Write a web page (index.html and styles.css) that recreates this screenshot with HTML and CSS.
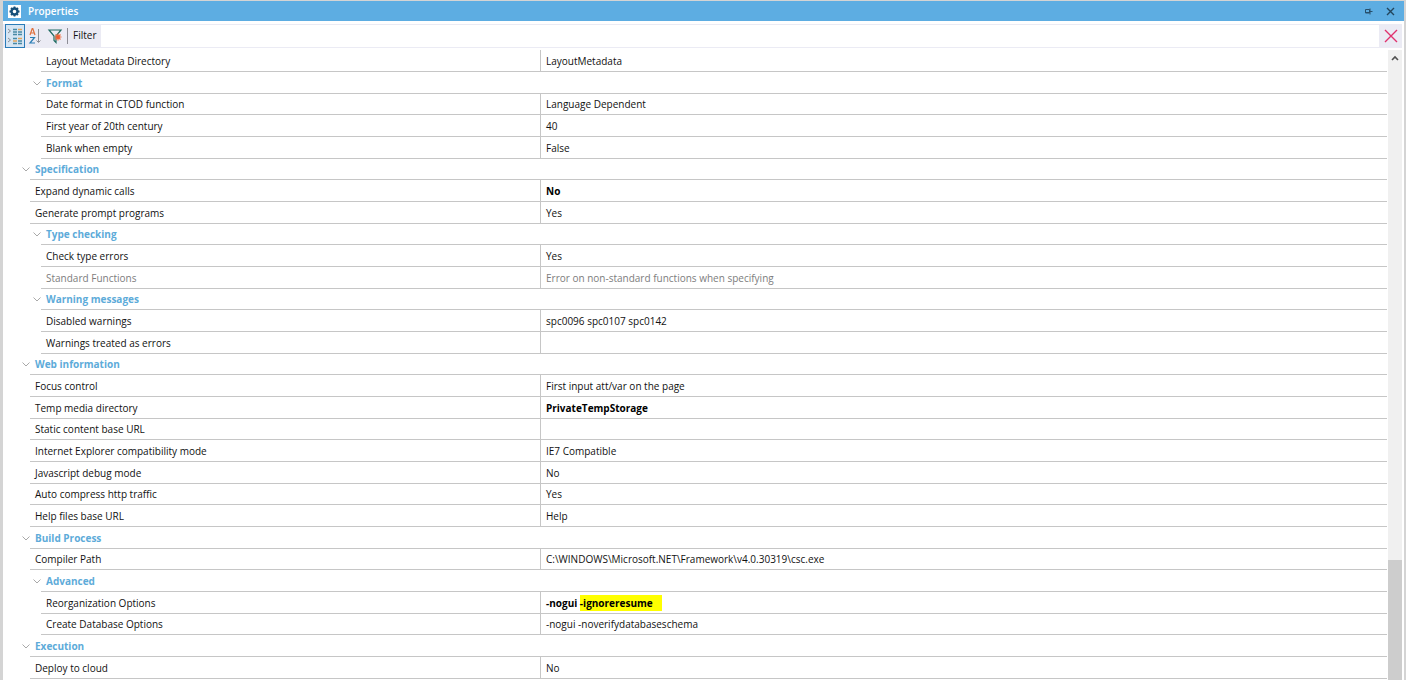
FILE: index.html
```
<!DOCTYPE html>
<html lang="en">
<head>
<meta charset="utf-8">
<title>Properties</title>
<link rel="stylesheet" href="styles.css">
</head>
<body>
<section class="panel">
  <header class="titlebar">
    <svg class="app-icon" width="13" height="13" viewBox="0 0 13 13" aria-hidden="true"><rect width="13" height="13" fill="#fff"/><circle cx="6.5" cy="6.5" r="3" fill="none" stroke="#17507a" stroke-width="2.4"/><path d="M6.5 1.500v2M6.500 9.500v2M1.500 6.500h2M9.500 6.500h2M3 3l1.200 1.200M8.800 8.800L10 10M10 3L8.800 4.200M4.200 8.800L3 10" stroke="#17507a" stroke-width="1.800"/></svg>
    <h1 class="title">Properties</h1>
    <button class="title-button" type="button" aria-label="Pin"><svg width="9" height="9" viewBox="0 0 9 9"><path d="M1.500 2.500h4v3.500h-4zM1 5.500h5M6 1.500v6M6 4.500h2.500" fill="none" stroke="#28506c"/></svg></button>
    <button class="title-button" type="button" aria-label="Close"><svg width="9" height="9" viewBox="0 0 9 9"><path d="M1 1l7 7M8 1L1 8" stroke="#23455c" stroke-width="1.4"/></svg></button>
  </header>
  <div class="toolbar">
    <button class="tool tool-active" type="button" aria-label="Categorized"><svg width="18" height="18" viewBox="0 0 18 18"><path d="M2 2l2.500 2L2 6M2 11l2.500 2L2 15" fill="none" stroke="#8b8f96"/><path d="M7 2.500h4M7 5h4M7 7.500h4M12 5h4M12 7.500h4M7 11.500h4M7 16.500h4M12 14h4M12 16.500h4" stroke="#4889a5" stroke-width="1.500"/><path d="M12 2.500h4M7 14h4M12 11.500h4" stroke="#e0a45c" stroke-width="1.500"/></svg></button>
    <button class="tool" type="button" aria-label="Alphabetical"><svg width="14" height="18" viewBox="0 0 14 18"><path d="M2 8l2.200-6.500h.6L7 8M3 6h3" fill="none" stroke="#e0703c" stroke-width="1.200"/><path d="M2 10.500h4.500L2 16h5" fill="none" stroke="#2a7fb5" stroke-width="1.200"/><path d="M10.500 2v13M8.500 13.500l2 2 2-2" fill="none" stroke="#8a8d93"/></svg></button>
    <button class="tool" type="button" aria-label="Filter properties"><svg width="16" height="18" viewBox="0 0 16 18"><path d="M2 3h12L9 9v6.500L7 13.500V9z" fill="none" stroke="#1f6b62" stroke-width="1.200"/><path d="M11 6.500v7M7.500 10h7M8.500 7.500l5 5M13.500 7.500l-5 5" stroke="#f0703f" stroke-width="1.200"/><circle cx="11" cy="10" r="1.800" fill="#ef5a33"/></svg></button>
    <label class="filter-label" for="filter">Filter</label>
    <input class="filter" id="filter" type="text">
    <button class="clear" type="button" aria-label="Clear filter"><svg width="14" height="14" viewBox="0 0 14 14"><path d="M1 1l12 12M13 1L1 13" stroke="#e0316e" stroke-width="1.400"/></svg></button>
  </div>
  <div class="content">
    <table class="grid">
      <colgroup><col class="col-gutter"><col class="col-indent"><col class="col-name"><col></colgroup>
      <tbody>
        <tr><td colspan="2"></td><td class="name">Layout Metadata Directory</td><td class="value">LayoutMetadata</td></tr>
        <tr><td colspan="2" class="toggle"><svg class="chevron" viewBox="0 0 8 5"><path d="M.5.5L4 4L7.500.5"/></svg></td><th colspan="2" class="group">Format</th></tr>
        <tr><td colspan="2"></td><td class="name">Date format in CTOD function</td><td class="value">Language Dependent</td></tr>
        <tr><td colspan="2"></td><td class="name">First year of 20th century</td><td class="value">40</td></tr>
        <tr><td colspan="2"></td><td class="name">Blank when empty</td><td class="value">False</td></tr>
        <tr><td class="toggle"><svg class="chevron" viewBox="0 0 8 5"><path d="M.5.5L4 4L7.500.5"/></svg></td><th colspan="3" class="group">Specification</th></tr>
        <tr><td></td><td colspan="2" class="name">Expand dynamic calls</td><td class="value strong">No</td></tr>
        <tr><td></td><td colspan="2" class="name">Generate prompt programs</td><td class="value">Yes</td></tr>
        <tr><td colspan="2" class="toggle"><svg class="chevron" viewBox="0 0 8 5"><path d="M.5.5L4 4L7.500.5"/></svg></td><th colspan="2" class="group">Type checking</th></tr>
        <tr><td colspan="2"></td><td class="name">Check type errors</td><td class="value">Yes</td></tr>
        <tr class="disabled"><td colspan="2"></td><td class="name">Standard Functions</td><td class="value">Error on non-standard functions when specifying</td></tr>
        <tr><td colspan="2" class="toggle"><svg class="chevron" viewBox="0 0 8 5"><path d="M.5.5L4 4L7.500.5"/></svg></td><th colspan="2" class="group">Warning messages</th></tr>
        <tr><td colspan="2"></td><td class="name">Disabled warnings</td><td class="value">spc0096 spc0107 spc0142</td></tr>
        <tr><td colspan="2"></td><td class="name">Warnings treated as errors</td><td class="value"></td></tr>
        <tr><td class="toggle"><svg class="chevron" viewBox="0 0 8 5"><path d="M.5.5L4 4L7.500.5"/></svg></td><th colspan="3" class="group">Web information</th></tr>
        <tr><td></td><td colspan="2" class="name">Focus control</td><td class="value">First input att/var on the page</td></tr>
        <tr><td></td><td colspan="2" class="name">Temp media directory</td><td class="value strong">PrivateTempStorage</td></tr>
        <tr><td></td><td colspan="2" class="name">Static content base URL</td><td class="value"></td></tr>
        <tr><td></td><td colspan="2" class="name">Internet Explorer compatibility mode</td><td class="value">IE7 Compatible</td></tr>
        <tr><td></td><td colspan="2" class="name">Javascript debug mode</td><td class="value">No</td></tr>
        <tr><td></td><td colspan="2" class="name">Auto compress http traffic</td><td class="value">Yes</td></tr>
        <tr><td></td><td colspan="2" class="name">Help files base URL</td><td class="value">Help</td></tr>
        <tr><td class="toggle"><svg class="chevron" viewBox="0 0 8 5"><path d="M.5.5L4 4L7.500.5"/></svg></td><th colspan="3" class="group">Build Process</th></tr>
        <tr><td></td><td colspan="2" class="name">Compiler Path</td><td class="value">C:\WINDOWS\Microsoft.NET\Framework\v4.0.30319\csc.exe</td></tr>
        <tr><td colspan="2" class="toggle"><svg class="chevron" viewBox="0 0 8 5"><path d="M.5.5L4 4L7.500.5"/></svg></td><th colspan="2" class="group">Advanced</th></tr>
        <tr><td colspan="2"></td><td class="name">Reorganization Options</td><td class="value strong">-nogui <mark class="highlight">-ignoreresume</mark></td></tr>
        <tr><td colspan="2"></td><td class="name">Create Database Options</td><td class="value">-nogui -noverifydatabaseschema</td></tr>
        <tr><td class="toggle"><svg class="chevron" viewBox="0 0 8 5"><path d="M.5.5L4 4L7.500.5"/></svg></td><th colspan="3" class="group">Execution</th></tr>
        <tr><td></td><td colspan="2" class="name">Deploy to cloud</td><td class="value">No</td></tr>
      </tbody>
    </table>
    <div class="scrollbar">
      <svg class="scroll-up" width="14" height="18" viewBox="0 0 14 18" aria-hidden="true"><path d="M4 10l3-3 3 3" fill="none" stroke="#505050" stroke-width="1.600"/></svg>
      <div class="scroll-thumb"></div>
    </div>
  </div>
</section>
</body>
</html>
```
FILE: styles.css
```
* { box-sizing: border-box; }

body {
  margin: 0;
  background: #d4d4d4;
  color: #111;
  font: 10px/14px "Open Sans", "Noto Sans", sans-serif;
}

button {
  display: flex;
  align-items: center;
  justify-content: center;
  padding: 0;
  border: 0;
  background: none;
}

.panel {
  display: flex;
  flex-direction: column;
  height: 100vh;
  overflow: hidden;
  border: solid #d4d4d4;
  border-width: 1px 2px 0 3px;
  background: #fff;
}

.titlebar {
  display: flex;
  flex: none;
  align-items: center;
  height: 20px;
  padding: 0 3px 0 5px;
  background: #5dade2;
}

.title {
  flex: 1;
  margin: 0 0 0 7px;
  color: #fff;
  font-size: 10px;
  font-weight: 600;
}

.title-button { width: 22px; height: 20px; }

.toolbar {
  display: flex;
  flex: none;
  height: 24px;
  margin: 3px 2px 2px 0;
  padding-left: 2px;
  background: #ebebf4;
}

.tool { width: 20px; height: 24px; }
.tool-active { border: 1px solid #2b7cb8; background: #d5e5f3; }

.filter-label {
  margin: 4px 0;
  margin-left: 2px;
  padding: 0 5px 0 5px;
  border-left: 1px solid #8d8d95;
  line-height: 15px;
}

.filter {
  flex: 1;
  min-width: 0;
  margin: 1px 0;
  padding: 0 4px;
  border: 0;
  background: #fff;
  font: inherit;
}

.clear { width: 23px; }

.content { display: flex; flex: 1; min-height: 0; }

.grid {
  flex: 1;
  align-self: flex-start;
  table-layout: fixed;
  border-collapse: separate;
  border-spacing: 0;
}

.col-gutter { width: 27px; }
.col-indent { width: 11px; }
.col-name { width: 499px; }

tr { height: 22px; }
tr:nth-child(3n) { height: 21px; }
td, th { padding: 0; white-space: nowrap; }

.name, .value, .group {
  padding-left: 5px;
  border-bottom: 1px solid #c6c6c6;
  text-align: left;
}

.value { border-left: 1px solid #c6c6c6; }
.strong { color: #000; font-weight: 700; }
.group { color: #5dabd9; font-weight: 700; }
.disabled { color: #7d7d7d; }

.toggle { text-align: right; line-height: 0; }

.chevron {
  width: 8px;
  height: 5px;
  fill: none;
  stroke: #a9a9a9;
}

.highlight {
  padding: 1px 9px 1px 0;
  background: #ff0;
  color: inherit;
}

.scrollbar {
  display: flex;
  flex: none;
  flex-direction: column;
  justify-content: space-between;
  width: 14px;
  margin: 0 2px 0 1px;
  background: #f0f0f0;
}

.scroll-thumb { height: 19%; background: #cdcdcd; }
```
